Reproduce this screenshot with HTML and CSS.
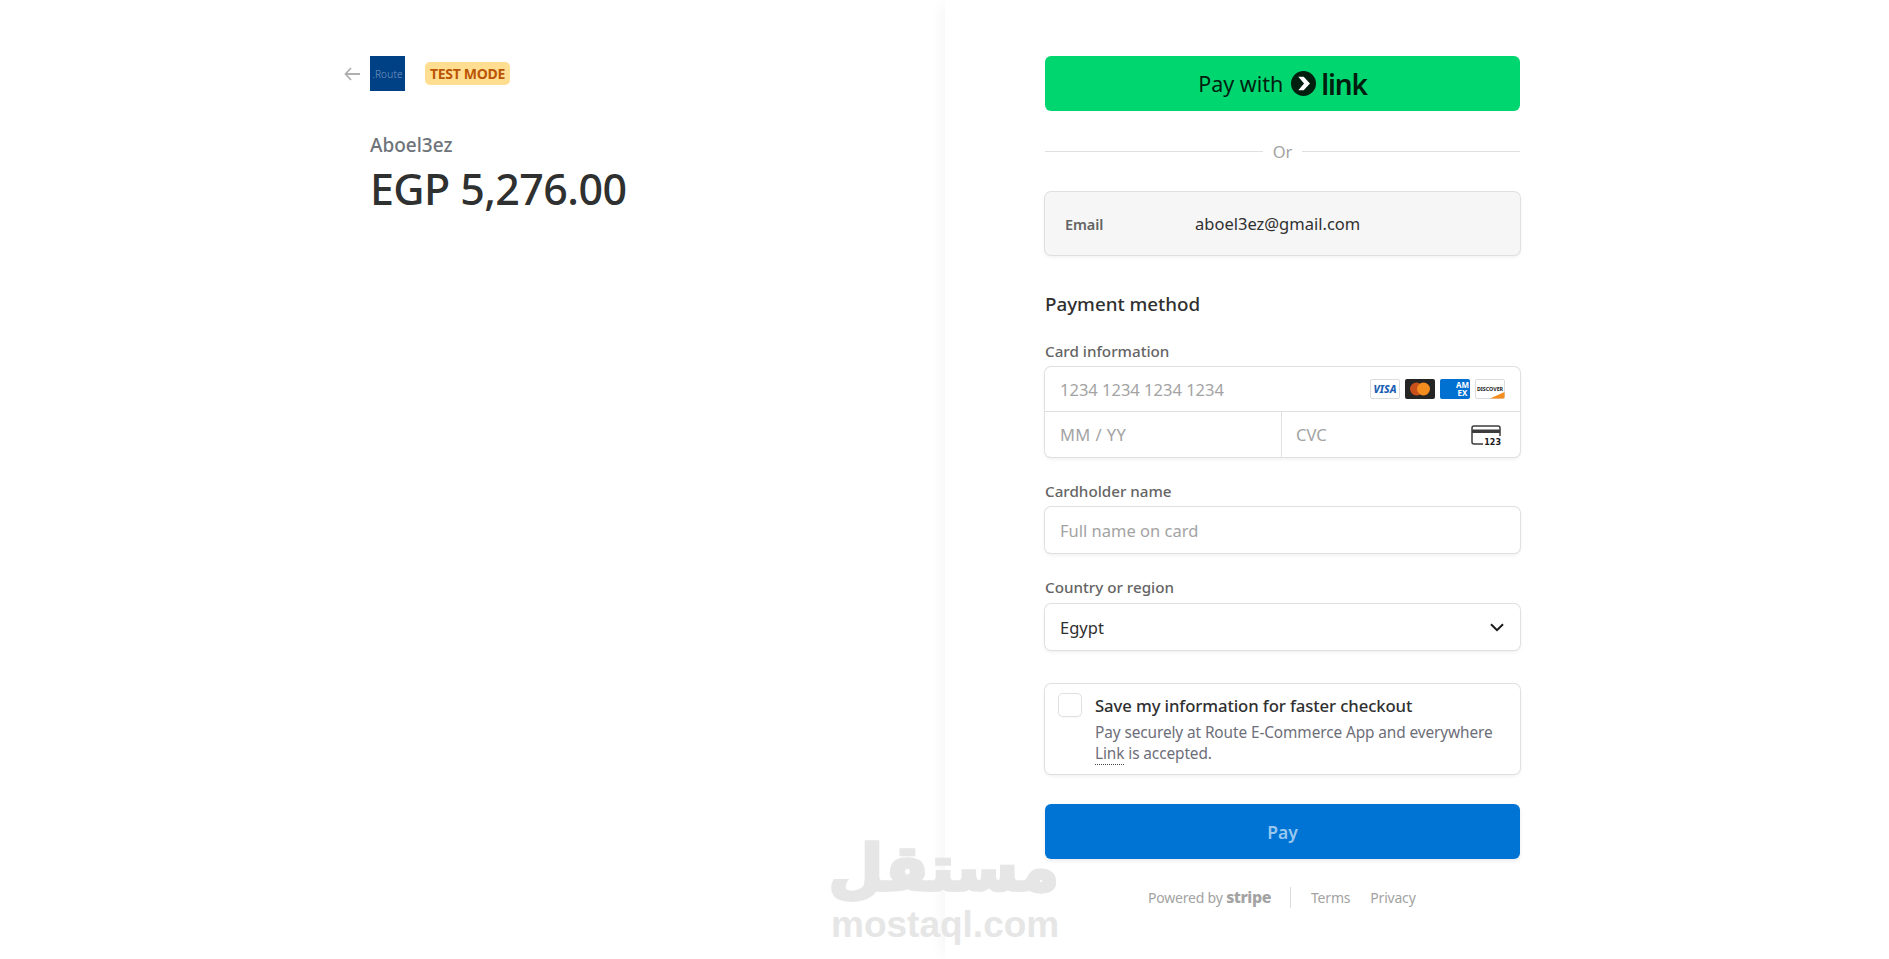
FILE: index.html
```html
<!DOCTYPE html>
<html lang="en">
<head>
<meta charset="utf-8">
<title>Checkout</title>
<link rel="stylesheet" href="styles.css">
</head>
<body>
<main class="page">
  <section class="summary">
    <header class="summary-head">
      <svg class="back" viewBox="0 0 16 14" width="16" height="14"><path d="M7 1 1.500 7 7 13M2 7h14" fill="none" stroke="#b0b0b0" stroke-width="1.800"/></svg>
      <div class="logo"><span class="logo-text">.Route</span></div>
      <span class="badge">TEST MODE</span>
    </header>
    <div class="merchant">Aboel3ez</div>
    <div class="amount">EGP 5,276.00</div>
  </section>
  <section class="pay-panel">
    <button class="link-btn">
      <span>Pay with</span>
      <svg class="link-mark" viewBox="0 0 24 24" width="25" height="25"><circle cx="12" cy="12" r="12" fill="#011e0f"/><path d="M7 5.500h5.200l6 6.500-6 6.500H7l5.500-6.500z" fill="#fff"/></svg>
      <span class="link-word">link</span>
    </button>
    <div class="divider"><span>Or</span></div>
    <div class="email-box"><span class="email-label">Email</span><span class="email-value">aboel3ez@gmail.com</span></div>
    <h2 class="section-title">Payment method</h2>
    <div class="label label-first">Card information</div>
    <div class="card-box">
      <div class="card-row">
        <span class="placeholder">1234 1234 1234 1234</span>
        <div class="brands">
          <svg class="brand" viewBox="0 0 30 20" width="30" height="20"><rect x=".5" y=".5" width="29" height="19" rx="1.500" fill="#fff" stroke="#dcdcdc"/><text x="15" y="14" text-anchor="middle" class="visa-text">VISA</text></svg>
          <svg class="brand" viewBox="0 0 30 20" width="30" height="20"><rect width="30" height="20" rx="2" fill="#252525"/><circle cx="11.500" cy="10" r="6.500" fill="#c8501a"/><circle cx="18.500" cy="10" r="6.500" fill="#f48c1e"/></svg>
          <svg class="brand" viewBox="0 0 30 20" width="30" height="20"><rect width="30" height="20" rx="2" fill="#0070d1"/><text x="22.500" y="9" text-anchor="middle" class="amex-text">AM</text><text x="22.500" y="16.500" text-anchor="middle" class="amex-text">EX</text></svg>
          <svg class="brand" viewBox="0 0 30 20" width="30" height="20"><rect x=".5" y=".5" width="29" height="19" rx="1.500" fill="#fff" stroke="#dcdcdc"/><path d="M15 19.500 29.500 13v5a1.500 1.500 0 0 1-1.500 1.500z" fill="#f48c1e"/><text x="15" y="12" text-anchor="middle" class="disc-text">DISCOVER</text></svg>
        </div>
      </div>
      <div class="card-split">
        <div class="card-cell"><span class="placeholder placeholder-date">MM / YY</span></div>
        <div class="card-cell card-cell-cvc">
          <span class="placeholder">CVC</span>
          <svg class="cvc" viewBox="0 0 30 20" width="30" height="20"><path d="M12 19H3a2 2 0 0 1-2-2V3a2 2 0 0 1 2-2h24a2 2 0 0 1 2 2v8" fill="none" stroke="#3c3c3c" stroke-width="1.500"/><path d="M1 4.500h28V8H1z" fill="#3c3c3c"/><text x="30" y="19.500" text-anchor="end" class="cvc-text">123</text></svg>
        </div>
      </div>
    </div>
    <div class="label">Cardholder name</div>
    <div class="field"><span class="placeholder">Full name on card</span></div>
    <div class="label">Country or region</div>
    <div class="field field-select">
      <span class="select-value">Egypt</span>
      <svg viewBox="0 0 14 9" width="14" height="9"><path d="M1 1.200 7 7.200l6-6" fill="none" stroke="#1a1a1a" stroke-width="2"/></svg>
    </div>
    <div class="save-box">
      <span class="checkbox"></span>
      <div class="save-copy">
        <div class="save-title">Save my information for faster checkout</div>
        <div class="save-note">Pay securely at Route E-Commerce App and everywhere <span class="save-link">Link</span> is accepted.</div>
      </div>
    </div>
    <button class="pay-btn">Pay</button>
    <footer class="foot">
      <span class="powered">Powered by <b class="stripe">stripe</b></span>
      <span class="foot-rule"></span>
      <span class="foot-link">Terms</span>
      <span class="foot-link">Privacy</span>
    </footer>
  </section>
</main>
<div class="watermark">
  <div class="wm-ar" lang="ar" dir="rtl">مستقل</div>
  <div class="wm-en">mostaql.com</div>
</div>
</body>
</html>
```
FILE: styles.css
```css
* { box-sizing: border-box; }
html, body { margin: 0; height: 100%; overflow: hidden; background: #fff; }
body { font-family: "Noto Sans", "Open Sans", sans-serif; color: #1a1a1a; }
.page { display: flex; height: 959px; }
.summary { width: 945px; padding: 56px 0 0 344px; flex: none; }
.summary-head { display: flex; align-items: center; height: 35px; }
.back { margin-right: 10px; }
.logo { width: 35px; height: 35px; background: #004085; display: flex; align-items: center; justify-content: center; }
.logo-text { font-size: 10px; font-weight: 300; color: #7b9cc4; letter-spacing: .2px; }
.badge { margin-left: 20px; height: 23px; width: 85px; border-radius: 5px; background: #ffde92; color: #bb5504; font-size: 14px; font-weight: 700; display: flex; align-items: center; justify-content: center; letter-spacing: -.3px; }
.merchant { margin: 41px 0 0 26px; font-size: 19px; line-height: 26px; font-weight: 500; color: #6e7479; }
.amount { margin: 2px 0 0 26px; font-size: 43px; line-height: 58px; font-weight: 500; color: #2f3030; letter-spacing: -.6px; }

.pay-panel { flex: 1; padding: 56px 0 0 100px; box-shadow: -10px 0 12px -4px rgba(0, 0, 0, .03); }
.pay-panel > * { width: 475px; }
.link-btn { height: 55px; border: 0; border-radius: 6px; background: #00d66f; color: #011e0f; display: flex; align-items: center; justify-content: center; font-family: inherit; font-size: 21.500px; padding: 0; }
.link-mark { margin: 0 5px 0 8px; }
.link-word { font-size: 28px; font-weight: 600; letter-spacing: -1.200px; line-height: 1; }
.divider { margin-top: 30px; height: 20px; display: flex; align-items: center; gap: 10px; color: #a3a3a3; font-size: 16.500px; }
.divider::before, .divider::after { content: ""; flex: 1; height: 1px; background: #e0e0e0; }
.email-box { margin-top: 31px; height: 63px; border-radius: 6px; background: #f6f6f6; display: flex; align-items: center; padding-left: 20px; box-shadow: 0 0 0 1px #e0e0e0, 0 2px 4px rgba(0, 0, 0, .07); }
.email-label { width: 130px; font-size: 14.500px; font-weight: 600; color: #646464; letter-spacing: -.1px; }
.email-value { font-size: 16.500px; color: #303030; }
.section-title { margin: 37px 0 0; font-size: 18.800px; line-height: 24px; font-weight: 500; color: #303030; }
.label { margin-top: 24px; font-size: 15.200px; line-height: 20px; font-weight: 500; color: #646464; }
.label-first { margin-top: 25px; }
.placeholder { font-size: 16.500px; color: #a3a3a3; }
.placeholder-date { letter-spacing: .4px; }
.card-box, .field, .save-box { border-radius: 6px; background: #fff; box-shadow: 0 0 0 1px #e0e0e0, 0 2px 4px rgba(0, 0, 0, .07); }
.card-box { margin-top: 6px; height: 90px; overflow: hidden; display: flex; flex-direction: column; }
.card-row { height: 45px; flex: none; display: flex; align-items: center; justify-content: space-between; padding: 0 15px 0 15px; border-bottom: 1px solid #e0e0e0; }
.brands { display: flex; gap: 5px; }
.brand { display: block; }
.visa-text { font: italic 800 10.500px "Noto Sans", sans-serif; fill: #1a5fb4; }
.amex-text { font: 700 8px "Noto Sans", sans-serif; fill: #fff; }
.disc-text { font: 700 5.300px "Noto Sans", sans-serif; fill: #222; }
.cvc-text { font: 700 8px "DejaVu Sans", sans-serif; fill: #1a1a1a; }
.card-split { flex: 1; display: flex; }
.card-cell { width: 236px; flex: none; display: flex; align-items: center; padding: 0 15px; }
.card-cell-cvc { flex: 1; justify-content: space-between; border-left: 1px solid #e0e0e0; padding: 0 19px 0 14px; }
.field { margin-top: 6px; height: 46px; display: flex; align-items: center; padding: 0 15px; }
.field-select { margin-top: 7px; justify-content: space-between; padding: 0 16px 0 15px; }
.select-value { font-size: 16.500px; color: #303030; }
.save-box { margin-top: 34px; height: 90px; display: flex; padding: 10px 14px; gap: 14px; }
.checkbox { flex: none; width: 22px; height: 22px; border-radius: 4px; background: #fff; box-shadow: 0 0 0 1px #e0e0e0, 0 1px 2px rgba(0, 0, 0, .08); }
.save-copy { flex: 1; }
.save-title { font-size: 16.700px; line-height: 24px; font-weight: 500; color: #303030; letter-spacing: -.1px; }
.save-note { margin-top: 4px; font-size: 15.400px; line-height: 21px; color: #6d6e78; letter-spacing: -.1px; }
.save-link { border-bottom: 1px dotted #444; }
.pay-btn { display: block; margin-top: 30px; height: 55px; border: 0; border-radius: 6px; background: #0074d4; color: #99c7ee; font-family: inherit; font-size: 17.500px; font-weight: 600; box-shadow: 0 2px 4px rgba(0, 0, 0, .08); }
.foot { margin-top: 28px; height: 21px; display: flex; align-items: center; padding-left: 103px; font-size: 14px; color: #a3a3a3; letter-spacing: -.2px; }
.stripe { font-size: 16px; font-weight: 800; letter-spacing: -.45px; line-height: 16px; }
.powered { width: 142px; line-height: 16px; }
.foot-rule { width: 1px; height: 21px; background: #dcdcdc; margin-right: 20px; }
.foot-link { margin-right: 20px; }
.watermark { position: absolute; left: 831px; top: 832px; width: 228px; color: #e6e6e6; text-align: center; pointer-events: none; }
.wm-ar { font: 700 63px/74px "DejaVu Sans", sans-serif; -webkit-text-stroke: 3.500px #e6e6e6; }
.wm-en { font: 700 37px/36px "Liberation Sans", sans-serif; margin-top: 1px; }
```
